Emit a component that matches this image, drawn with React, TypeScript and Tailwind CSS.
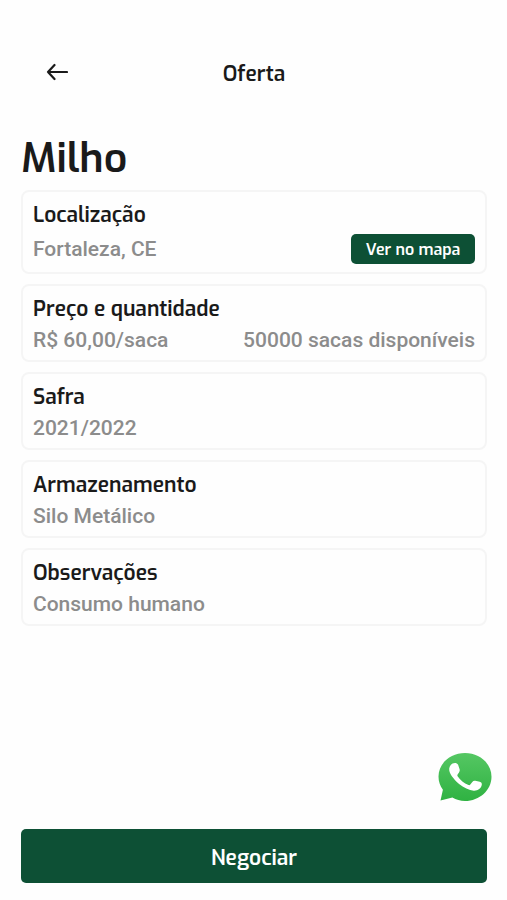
import type { ReactNode } from "react";

const headingFont = "font-[Exo,'Exo_2','Open_Sans','Noto_Sans',sans-serif]";

function Card({ title, children }: { title: string; children: ReactNode }) {
  return (
    <section className="rounded-lg border-2 border-[#f5f5f5] px-[10px] pt-[11px] pb-2">
      <h2 className={`${headingFont} text-[21px] leading-6 font-semibold text-[#1a1a1a]`}>{title}</h2>
      <div className="mt-[7px] flex items-center justify-between text-[21px] leading-6 font-medium text-[#8c8c8c]">
        {children}
      </div>
    </section>
  );
}

function WhatsAppIcon() {
  return (
    <svg viewBox="0 0 54 50" className="h-[50px] w-[54px]" aria-hidden="true">
      <defs>
        <linearGradient id="bubble" x1="0" y1="0" x2="0" y2="1">
          <stop offset="0" stopColor="#55c763" />
          <stop offset="1" stopColor="#2fb242" />
        </linearGradient>
      </defs>
      <path
        fill="url(#bubble)"
        d="M27 1C12.500 1 0.500 11.300 0.500 24.500C0.500 29.500 2.100 34 4.900 37.700L2.500 48.500L14.400 45.600C18.100 47.600 22.400 49 27 49C41.500 49 53.500 38 53.500 24.700C53.500 11.400 41.500 1 27 1Z"
      />
      <path
        fill="#fff"
        d="M14.500 11.600C16.500 10.500 18.900 10.600 20.100 12.800L21.600 17.300C21.900 18.500 21.700 19.400 21 20.400L19.600 22.400C19.200 23 19.200 23.500 19.600 24.200C22.300 28.300 26 31.200 30.500 33C31.200 33.300 31.800 33.200 32.300 32.600L34.300 29.900C35.100 28.900 36 28.500 37.200 28.700L41.800 29.700C43.300 30.100 44 31.200 43.800 32.800C43.200 36.700 39.500 38.900 35.800 38.700C31.100 38.400 25.600 35.700 21.100 32C16.600 28.200 12.400 23.300 11.300 18.800C10.700 15.800 12.200 12.900 14.500 11.600Z"
      />
    </svg>
  );
}

export default function App() {
  return (
    <div className="relative flex min-h-screen flex-col bg-[#fefefe] pr-5 pb-[17px] pl-[21px] font-[Roboto,sans-serif]">
      <header className="mt-14 grid h-8 grid-cols-[1fr_auto_1fr] items-center">
        <button type="button" aria-label="Voltar" className="ml-[25px] w-[22px]">
          <svg
            viewBox="0 0 22 18"
            className="h-[18px] w-[22px]"
            fill="none"
            stroke="#1a1a1a"
            strokeWidth="2.200"
            strokeLinecap="round"
            strokeLinejoin="round"
            aria-hidden="true"
          >
            <path d="M21 9H2M8.500 2L2 9L8.500 16" />
          </svg>
        </button>
        <span className={`${headingFont} pt-[3px] text-[21px] leading-6 font-semibold text-[#1a1a1a]`}>Oferta</span>
      </header>

      <main className="mt-[46px]">
        <h1 className={`${headingFont} text-[41px] leading-12 font-semibold text-[#1a1a1a]`}>Milho</h1>
        <div className="mt-2 flex flex-col gap-[10px]">
          <Card title="Localização">
            <span>Fortaleza, CE</span>
            <button
              type="button"
              className={`${headingFont} h-[30px] w-[124px] rounded-[5px] bg-[#0d5035] pt-0.5 text-[16px] leading-6 font-semibold text-white`}
            >
              Ver no mapa
            </button>
          </Card>
          <Card title="Preço e quantidade">
            <span>R$ 60,00/saca</span>
            <span>50000 sacas disponíveis</span>
          </Card>
          <Card title="Safra">
            <span>2021/2022</span>
          </Card>
          <Card title="Armazenamento">
            <span>Silo Metálico</span>
          </Card>
          <Card title="Observações">
            <span>Consumo humano</span>
          </Card>
        </div>
      </main>

      <button
        type="button"
        className={`${headingFont} mt-auto h-[54px] w-full rounded-[5px] bg-[#0d5035] pt-[3px] text-[21px] leading-6 font-semibold text-white`}
      >
        Negociar
      </button>

      <button type="button" aria-label="WhatsApp" className="absolute right-[15px] bottom-[98px]">
        <WhatsAppIcon />
      </button>
    </div>
  );
}
